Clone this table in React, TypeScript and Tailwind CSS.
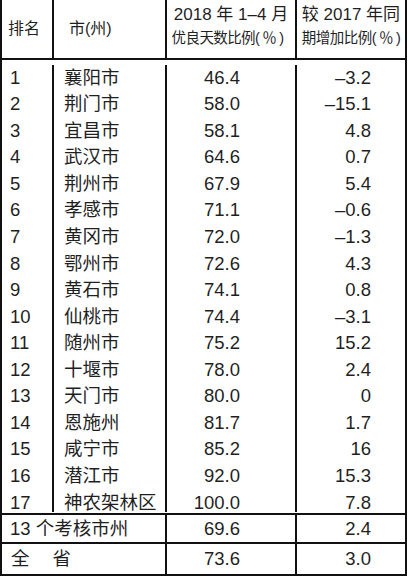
const rows: [string, string, string, string][] = [
  ['1', '襄阳市', '46.4', '–3.2'],
  ['2', '荆门市', '58.0', '–15.1'],
  ['3', '宜昌市', '58.1', '4.8'],
  ['4', '武汉市', '64.6', '0.7'],
  ['5', '荆州市', '67.9', '5.4'],
  ['6', '孝感市', '71.1', '–0.6'],
  ['7', '黄冈市', '72.0', '–1.3'],
  ['8', '鄂州市', '72.6', '4.3'],
  ['9', '黄石市', '74.1', '0.8'],
  ['10', '仙桃市', '74.4', '–3.1'],
  ['11', '随州市', '75.2', '15.2'],
  ['12', '十堰市', '78.0', '2.4'],
  ['13', '天门市', '80.0', '0'],
  ['14', '恩施州', '81.7', '1.7'],
  ['15', '咸宁市', '85.2', '16'],
  ['16', '潜江市', '92.0', '15.3'],
  ['17', '神农架林区', '100.0', '7.8'],
]

export default function App() {
  return (
    <div className="bg-white w-[408px] h-[577px] text-[#1f1f1f] font-['Liberation_Sans','Noto_Sans_CJK_SC',sans-serif]">
      <div className="w-[407px] border-x-2 border-b-2 border-[#111]">
        {/* header */}
        <div className="flex h-[60px] border-b-2 border-[#111]">
          <div className="w-[52px] border-r-2 border-[#111] flex items-center pl-[6px] text-[16px]">排名</div>
          <div className="w-[113px] border-r-2 border-[#111] flex items-center pl-[15px] text-[16px]">市(州)</div>
          <div className="w-[130px] border-r-2 border-[#111] flex flex-col items-center pt-[4px] whitespace-nowrap">
            <div className="text-[17px] leading-[22.5px]">2018 年 1–4 月</div>
            <div className="text-[14.5px] leading-[22.5px] tracking-[-0.6px] -ml-[7px]">
              优良天数比例(<span className="mx-[3px]">％</span>)
            </div>
          </div>
          <div className="w-[108px] flex flex-col items-center pt-[4px] whitespace-nowrap">
            <div className="text-[17px] leading-[22.5px]">较 2017 年同</div>
            <div className="text-[14.5px] leading-[22.5px] tracking-[-0.5px]">
              期增加比例(<span className="mx-[3px]">％</span>)
            </div>
          </div>
        </div>

        {/* ranking rows */}
        <div className="h-[455px] border-b-2 border-[#111] flex flex-col text-[18.5px]">
          {rows.map(([rank, city, ratio, change], i) => (
            <div
              key={rank}
              className={`flex ${i === 0 ? 'h-[31.3px] pt-[4.7px]' : i === rows.length - 1 ? 'h-[22.9px]' : 'h-[26.55px]'}`}
            >
              <div className="w-[52px] border-r-2 border-[#111] pl-[8px] leading-[26.55px]">{rank}</div>
              <div className="w-[113px] border-r-2 border-[#111] pl-[10px] leading-[26.55px] whitespace-nowrap">{city}</div>
              <div className="w-[130px] border-r-2 border-[#111] pr-[55px] text-right leading-[26.55px]">{ratio}</div>
              <div className="w-[108px] pr-[34px] text-right leading-[26.55px]">{change}</div>
            </div>
          ))}
        </div>

        {/* totals */}
        <div className="flex h-[29px] border-b-2 border-[#111] text-[18.5px]">
          <div className="w-[165px] border-r-2 border-[#111] pl-[8px] flex items-center">13 个考核市州</div>
          <div className="w-[130px] border-r-2 border-[#111] pr-[55px] flex items-center justify-end">69.6</div>
          <div className="w-[108px] pr-[34px] flex items-center justify-end">2.4</div>
        </div>
        <div className="flex h-[30px] text-[18.5px]">
          <div className="w-[165px] border-r-2 border-[#111] pl-[9px] flex items-center">
            全<span className="ml-[23px]">省</span>
          </div>
          <div className="w-[130px] border-r-2 border-[#111] pr-[55px] flex items-center justify-end">73.6</div>
          <div className="w-[108px] pr-[34px] flex items-center justify-end">3.0</div>
        </div>
      </div>
    </div>
  )
}
